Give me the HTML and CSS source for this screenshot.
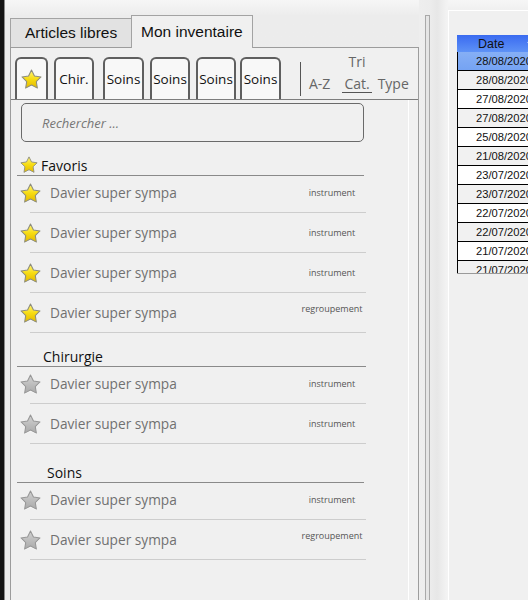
FILE: index.html
```html
<!DOCTYPE html>
<html lang="fr">
<head>
<meta charset="utf-8">
<title>Mon inventaire</title>
<link rel="stylesheet" href="styles.css">
</head>
<body>
<svg class="defs" aria-hidden="true">
  <defs>
    <linearGradient id="gy" x1="0" y1="0" x2="0" y2="1">
      <stop offset="0" stop-color="#fff47e"/>
      <stop offset="0.5" stop-color="#f7dc12"/>
      <stop offset="1" stop-color="#e2b900"/>
    </linearGradient>
    <linearGradient id="gg" x1="0" y1="0" x2="0" y2="1">
      <stop offset="0" stop-color="#d2d2d2"/>
      <stop offset="1" stop-color="#a9a9a9"/>
    </linearGradient>
    <symbol id="star-y" viewBox="0 0 20 20">
      <path transform="translate(0 1.2)" fill="#ffffff" d="M10 1 L12.82 6.62 L19.03 7.56 L14.57 11.98 L15.58 18.19 L10 15.3 L4.42 18.19 L5.43 11.98 L0.97 7.56 L7.18 6.62 Z"/>
      <path fill="url(#gy)" stroke="#8d8d7c" stroke-width="1" stroke-linejoin="round" d="M10 1 L12.82 6.62 L19.03 7.56 L14.57 11.98 L15.58 18.19 L10 15.3 L4.42 18.19 L5.43 11.98 L0.97 7.56 L7.18 6.62 Z"/>
    </symbol>
    <symbol id="star-g" viewBox="0 0 20 20">
      <path transform="translate(0 1.2)" fill="#ffffff" d="M10 1 L12.82 6.62 L19.03 7.56 L14.57 11.98 L15.58 18.19 L10 15.3 L4.42 18.19 L5.43 11.98 L0.97 7.56 L7.18 6.62 Z"/>
      <path fill="url(#gg)" stroke="#979797" stroke-width="1" stroke-linejoin="round" d="M10 1 L12.82 6.62 L19.03 7.56 L14.57 11.98 L15.58 18.19 L10 15.3 L4.42 18.19 L5.43 11.98 L0.97 7.56 L7.18 6.62 Z"/>
    </symbol>
  </defs>
</svg>

<div class="edge"></div>

<div class="left">
  <div class="tabs">
    <div class="tab">Articles libres</div>
    <div class="tab active">Mon inventaire</div>
  </div>
  <div class="panel">
    <div class="toolbar">
      <div class="fbtn fstar"><svg class="bstar"><use href="#star-y"/></svg></div>
      <div class="fbtn chir">Chir.</div>
      <div class="fbtn soins w41">Soins</div>
      <div class="fbtn soins">Soins</div>
      <div class="fbtn soins">Soins</div>
      <div class="fbtn soins w41 last">Soins</div>
      <div class="sep"></div>
      <div class="sort">
        <span class="tri">Tri</span>
        <span class="az">A-Z</span>
        <span class="cat">Cat.</span>
        <span class="typ">Type</span>
      </div>
    </div>

    <div class="content">
      <div class="search">Rechercher ...</div>

      <div class="shead fav"><svg class="hstar"><use href="#star-y"/></svg>Favoris</div>
      <div class="item"><svg class="istar"><use href="#star-y"/></svg><div class="ibody"><span class="iname">Davier super sympa</span><span class="itype">instrument</span></div></div>
      <div class="item"><svg class="istar"><use href="#star-y"/></svg><div class="ibody"><span class="iname">Davier super sympa</span><span class="itype">instrument</span></div></div>
      <div class="item"><svg class="istar"><use href="#star-y"/></svg><div class="ibody"><span class="iname">Davier super sympa</span><span class="itype">instrument</span></div></div>
      <div class="item"><svg class="istar"><use href="#star-y"/></svg><div class="ibody"><span class="iname">Davier super sympa</span><span class="itype up">regroupement</span></div></div>

      <div class="shead chirh">Chirurgie</div>
      <div class="item"><svg class="istar"><use href="#star-g"/></svg><div class="ibody"><span class="iname">Davier super sympa</span><span class="itype">instrument</span></div></div>
      <div class="item"><svg class="istar"><use href="#star-g"/></svg><div class="ibody"><span class="iname">Davier super sympa</span><span class="itype">instrument</span></div></div>

      <div class="shead soinsh">Soins</div>
      <div class="item"><svg class="istar"><use href="#star-g"/></svg><div class="ibody"><span class="iname">Davier super sympa</span><span class="itype">instrument</span></div></div>
      <div class="item"><svg class="istar"><use href="#star-g"/></svg><div class="ibody"><span class="iname">Davier super sympa</span><span class="itype up">regroupement</span></div></div>
    </div>
  </div>
</div>

<div class="split"><div class="grip"></div></div>

<div class="right">
  <div class="grid">
    <div class="ghead"><span>Date</span><svg class="sortmark" viewBox="0 0 6 4"><path d="M0 4 L3 0 L6 4 Z" fill="#cfe0ff"/></svg></div>
    <div class="grow sel">28/08/2020</div>
    <div class="grow alt">28/08/2020</div>
    <div class="grow">27/08/2020</div>
    <div class="grow alt">27/08/2020</div>
    <div class="grow">25/08/2020</div>
    <div class="grow alt">21/08/2020</div>
    <div class="grow">23/07/2020</div>
    <div class="grow alt">23/07/2020</div>
    <div class="grow">22/07/2020</div>
    <div class="grow alt">22/07/2020</div>
    <div class="grow">21/07/2020</div>
    <div class="grow alt">21/07/2020</div>
  </div>
</div>
</body>
</html>
```

FILE: styles.css
```css
* { box-sizing: border-box; }
html, body { margin: 0; padding: 0; }
body {
  width: 528px;
  height: 600px;
  overflow: hidden;
  display: flex;
  align-items: flex-start;
  background: linear-gradient(#f6f6f6, #ececec 16px, #ededed);
  font-family: "Open Sans", "Noto Sans", sans-serif;
}
.defs { position: absolute; width: 0; height: 0; overflow: hidden; }

.edge {
  width: 5px;
  height: 620px;
  flex: none;
  background: #141414;
  border-right: 1px solid #8a8a8a;
}

.left {
  width: 414px;
  height: 620px;
  flex: none;
  padding: 15px 0 0 5px;
  display: flex;
  flex-direction: column;
}

/* tabs */
.tabs {
  height: 32px;
  flex: none;
  display: flex;
  align-items: flex-end;
}
.tab {
  width: 122px;
  height: 29px;
  border: 1px solid #a3a3a3;
  border-bottom: none;
  background: #e2e2e2;
  font: 15.5px "Liberation Sans", Arial, sans-serif;
  color: #111;
  display: flex;
  align-items: center;
  padding-left: 14px;
}
.tab.active {
  height: 33px;
  margin-left: -1px;
  margin-bottom: -1px;
  padding-left: 9px;
  background: #f0f0f0;
  position: relative;
  z-index: 1;
}

/* panel */
.panel {
  flex: 1;
  border: 1px solid #9c9c9c;
  background: #f0f0f0;
  display: flex;
  flex-direction: column;
}
.toolbar {
  height: 52px;
  flex: none;
  border-bottom: 1px solid #7d7d7d;
  display: flex;
  align-items: flex-end;
  padding-left: 4px;
  gap: 6px;
}
.fbtn {
  height: 42px;
  width: 40px;
  flex: none;
  border: 2px solid #5f5f5f;
  border-bottom: none;
  border-radius: 6px 6px 0 0;
  background: #f8f8f8;
  display: flex;
  align-items: center;
  justify-content: center;
  font-size: 13.5px;
  color: #111;
}
.fbtn.fstar { width: 33px; }
.fbtn.chir { margin-right: 3px; }
.fbtn.w41 { width: 41px; }
.fbtn.last { margin-left: -2px; }
.bstar { width: 21px; height: 21px; margin-top: 1px; }

.sep {
  width: 1px;
  height: 34px;
  background: #555;
  margin: 0 0 3px 13px;
  flex: none;
}
.sort {
  align-self: flex-start;
  margin: 5px 0 0 2px;
  display: grid;
  grid-template-columns: auto auto auto;
  font-size: 14px;
  color: #666;
}
.sort .tri {
  grid-column: 2;
  justify-self: center;
  line-height: 18px;
  margin-bottom: 5px;
}
.sort .az, .sort .cat, .sort .typ { grid-row: 2; line-height: 16px; }
.sort .az { grid-column: 1; margin-right: 12px; }
.sort .cat { grid-column: 2; padding: 0 2px; border-bottom: 1px solid #555; }
.sort .typ { grid-column: 3; margin-left: 6px; }

/* content */
.content {
  flex: 1;
  padding-top: 3px;
  margin-right: 9px;
  border-right: 1px solid #ffffff;
}
.search {
  margin-left: 10px;
  width: 343px;
  height: 39px;
  border: 1px solid #6a6a6a;
  border-radius: 5px;
  display: flex;
  align-items: center;
  padding-left: 20px;
  font-size: 13px;
  font-style: italic;
  color: #777;
}

.shead {
  margin: 13px 0 0 6px;
  width: 347px;
  height: 21px;
  border-bottom: 1px solid #8a8a8a;
  display: flex;
  align-items: center;
  font-size: 14px;
  color: #111;
}
.shead.fav { padding-left: 3px; }
.shead.chirh { padding-left: 26px; width: 349px; }
.shead.soinsh { padding-left: 30px; margin-top: 18px; }
.hstar { width: 18px; height: 18px; margin-right: 3px; flex: none; }

.shead + .item { margin-top: -3px; }
.item {
  height: 40px;
  display: flex;
  align-items: center;
}
.istar {
  width: 21px;
  height: 21px;
  margin-left: 9px;
  margin-right: -11px;
  flex: none;
}
.ibody {
  width: 336px;
  height: 40px;
  border-bottom: 1px solid #cdcdcd;
  display: flex;
  align-items: center;
  padding-left: 20px;
}
.iname {
  font-size: 13.7px;
  color: #707070;
}
.itype {
  margin-left: auto;
  width: 68px;
  text-align: center;
  font-size: 9px;
  color: #555;
}
.itype.up { margin-bottom: 8px; }

/* splitter */
.split {
  width: 29px;
  height: 620px;
  flex: none;
  display: flex;
  background: linear-gradient(to right, #eeeeee 0, #ececec 12px, #e7e7e7 18px, #f3f3f3 28px);
}
.grip {
  margin: 15px 0 0 6px;
  width: 5px;
  border: 1px solid #a9a9a9;
  border-bottom: none;
  background: #e5e5e5;
}

/* right panel */
.right {
  flex: 1;
  height: 620px;
  margin-top: 10px;
  border-top: 1px solid #ffffff;
  border-left: 1px solid #ffffff;
  background: #f0f0f0;
  padding: 24px 0 0 8px;
  overflow: hidden;
}
.grid {
  width: 110px;
  height: 239px;
  overflow: hidden;
  border-bottom: 1px solid #9a9a9a;
  font-family: "Liberation Sans", Arial, sans-serif;
}
.ghead {
  height: 17px;
  background: linear-gradient(#3a6bf0, #4a7cf3 45%, #5e92f6);
  display: flex;
  align-items: center;
  padding-left: 21px;
  font-size: 12.5px;
  color: #111;
}
.sortmark { width: 6px; height: 4px; margin: 0 0 6px 23px; }
.grow {
  height: 19px;
  border-left: 1px solid #000;
  border-bottom: 1px solid #000;
  background: #ffffff;
  display: flex;
  align-items: center;
  padding-left: 18px;
  font-size: 11.2px;
  color: #111;
}
.grow.alt { background: #f1f1f1; }
.grow.sel { background: linear-gradient(#86aff5, #75a3f3); }
```
